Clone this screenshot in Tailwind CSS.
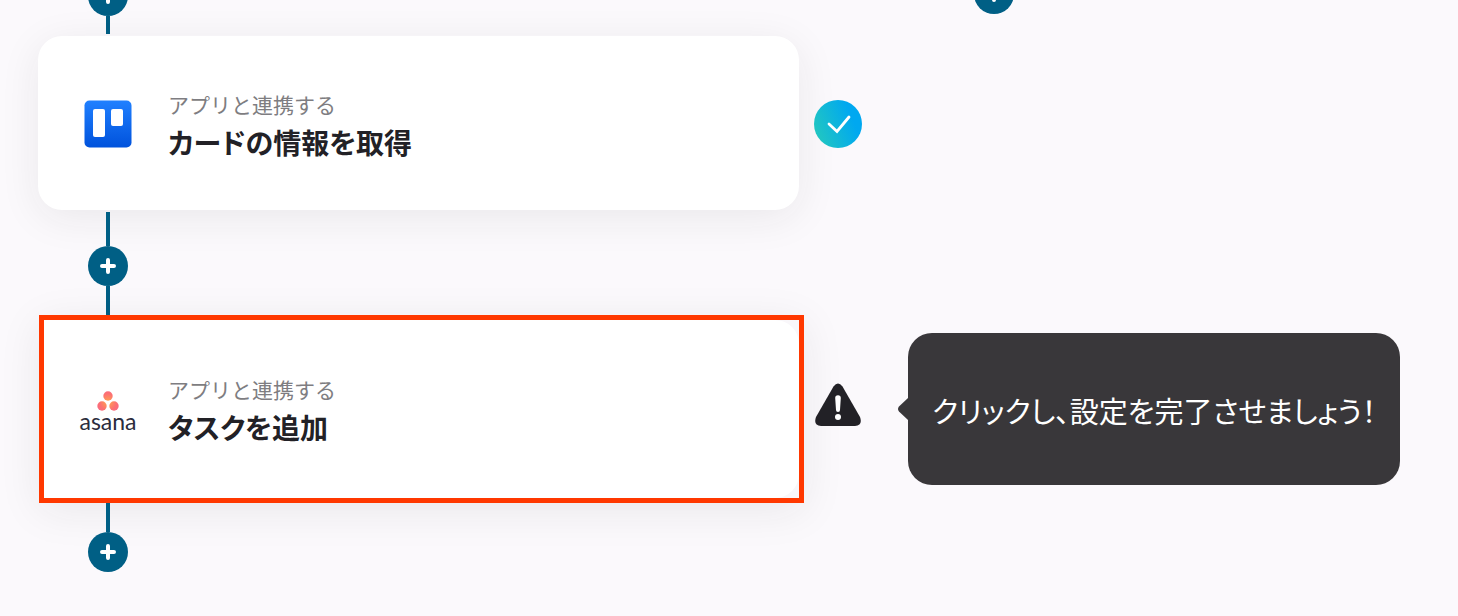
<!DOCTYPE html>
<html lang="ja">
<head>
    <meta charset="UTF-8">
    <meta name="viewport" content="width=device-width, initial-scale=1.0">
    <title>フローボット</title>
    <script src="https://cdn.jsdelivr.net/npm/@tailwindcss/browser@4"></script>
</head>
<body class="min-h-screen overflow-hidden bg-[#fbf9fc] font-['Noto_Sans_CJK_JP',sans-serif] text-[#222126]">
    <main class="-mt-6 pl-[38px]">

        <!-- Previous steps -->
        <div class="grid grid-cols-[minmax(0,1fr)_659px]">
            <div class="ml-[50px] flex w-10 flex-col items-center">
                <button type="button" aria-label="追加" class="flex size-10 items-center justify-center rounded-full bg-[#005f85]">
                    <svg class="size-4" viewBox="0 0 16 16" fill="none" stroke="white" stroke-width="4" stroke-linecap="round"><path d="M8 2v12M2 8h12"/></svg>
                </button>
                <div class="h-[18px] w-1 bg-[#005f85]"></div>
            </div>
            <div class="-mt-0.5 pl-[175px]">
                <button type="button" aria-label="追加" class="flex size-10 items-center justify-center rounded-full bg-[#005f85]">
                    <svg class="size-4" viewBox="0 0 16 16" fill="none" stroke="white" stroke-width="4" stroke-linecap="round"><path d="M8 2v12M2 8h12"/></svg>
                </button>
            </div>
        </div>

        <!-- Trello step -->
        <div class="my-0.5 grid grid-cols-[minmax(0,1fr)_659px] items-center">
            <section class="flex h-[174px] items-center rounded-3xl bg-white pt-0.5 pl-[42px] shadow-[0_8px_40px_rgba(34,33,34,0.08)]">
                <div class="flex w-14 shrink-0 justify-center">
                    <svg class="size-12" viewBox="0 0 48 48">
                        <defs>
                            <linearGradient id="trello" x1="0" y1="0" x2="0" y2="1">
                                <stop offset="0" stop-color="#2080ff"/>
                                <stop offset="1" stop-color="#0052dc"/>
                            </linearGradient>
                        </defs>
                        <rect x="0.5" y="0.5" width="47" height="47" rx="5" fill="url(#trello)"/>
                        <rect x="9" y="9" width="12" height="28" rx="2" fill="white"/>
                        <rect x="27" y="9" width="12" height="17" rx="2" fill="white"/>
                    </svg>
                </div>
                <div class="ml-8 pt-1">
                    <p class="text-[21px] leading-8 text-[#7e7d81]">アプリと連携する</p>
                    <h2 class="text-[28px] leading-11 font-bold [font-feature-settings:'palt']">カードの情報を取得</h2>
                </div>
            </section>
            <div class="pt-0.5 pl-[15px]">
                <svg class="size-12" viewBox="0 0 48 48" role="img" aria-label="完了">
                    <defs>
                        <linearGradient id="done" x1="0" y1="0.7" x2="1" y2="0.3">
                            <stop offset="0" stop-color="#22c7c0"/>
                            <stop offset="0.8" stop-color="#00a8f0"/>
                        </linearGradient>
                    </defs>
                    <circle cx="24" cy="24" r="24" fill="url(#done)"/>
                    <path d="M15 24l8 7.500L35 17" fill="none" stroke="white" stroke-width="2.800" stroke-linecap="round" stroke-linejoin="miter"/>
                </svg>
            </div>
        </div>

        <div class="ml-[50px] flex w-10 flex-col items-center">
            <div class="h-[34px] w-1 bg-[#005f85]"></div>
            <button type="button" aria-label="追加" class="flex size-10 items-center justify-center rounded-full bg-[#005f85]">
                <svg class="size-4" viewBox="0 0 16 16" fill="none" stroke="white" stroke-width="4" stroke-linecap="round"><path d="M8 2v12M2 8h12"/></svg>
            </button>
            <div class="h-[29px] w-1 bg-[#005f85]"></div>
        </div>

        <!-- Asana step, selected -->
        <div class="grid grid-cols-[minmax(0,1fr)_659px] items-center">
            <div class="-mr-[5px] ml-px border-5 border-[#ff3800] bg-[#f9f7fa] shadow-[0_8px_40px_rgba(34,33,34,0.08)]">
                <section class="flex h-[178px] items-center rounded-r-3xl bg-white pl-9">
                    <div class="flex w-14 shrink-0 flex-col items-center">
                        <svg class="mt-1 h-5 w-[22px]" viewBox="0 0 22 20">
                            <defs>
                                <radialGradient id="asana" gradientUnits="userSpaceOnUse" cx="11" cy="11" r="12">
                                    <stop offset="0" stop-color="#ffa64d"/>
                                    <stop offset="0.7" stop-color="#fc6f73"/>
                                    <stop offset="1" stop-color="#f96a80"/>
                                </radialGradient>
                            </defs>
                            <g fill="url(#asana)">
                                <circle cx="11" cy="5" r="4.700"/>
                                <circle cx="5" cy="15" r="4.700"/>
                                <circle cx="17" cy="15" r="4.700"/>
                            </g>
                        </svg>
                        <span class="font-['Lato',sans-serif] text-[23px] leading-5 text-[#2b2c3c]">asana</span>
                    </div>
                    <div class="ml-8 pt-1">
                        <p class="text-[21px] leading-8 text-[#7e7d81]">アプリと連携する</p>
                        <h2 class="text-[28px] leading-11 font-bold [font-feature-settings:'palt']">タスクを追加</h2>
                    </div>
                </section>
            </div>
            <div class="flex items-center pr-[58px] pl-[15px]">
                <svg class="mb-2 size-12 shrink-0" viewBox="0 0 48 48" role="img" aria-label="警告">
                    <path d="M19.500 5.500Q24-.5 28.500 5.500L46 36Q49 44.500 41 45H7Q-1 44.500 2 36Z" fill="#222126"/>
                    <path d="M21.200 17a2.800 2.800 0 0 1 5.600 0l-.8 12a2 2 0 0 1-4 0Z" fill="white"/>
                    <circle cx="24" cy="36" r="3" fill="white"/>
                </svg>
                <div role="tooltip" class="relative ml-[46px] flex h-[152px] flex-1 items-center rounded-3xl bg-[#39373a] pt-0.5 pl-6 text-white">
                    <svg class="absolute top-[65px] -left-2.5 h-[22px] w-2.5" viewBox="0 0 10 22"><path d="M10 0L1 8.500Q-1 11 1 13.500L10 22Z" fill="#39373a"/></svg>
                    <p class="text-[29px] leading-10 whitespace-nowrap [font-feature-settings:'palt']">クリックし、設定を完了させましょう！</p>
                </div>
            </div>
        </div>

        <div class="ml-[50px] flex w-10 flex-col items-center">
            <div class="h-[29px] w-1 bg-[#005f85]"></div>
            <button type="button" aria-label="追加" class="flex size-10 items-center justify-center rounded-full bg-[#005f85]">
                <svg class="size-4" viewBox="0 0 16 16" fill="none" stroke="white" stroke-width="4" stroke-linecap="round"><path d="M8 2v12M2 8h12"/></svg>
            </button>
        </div>
    </main>
</body>
</html>
